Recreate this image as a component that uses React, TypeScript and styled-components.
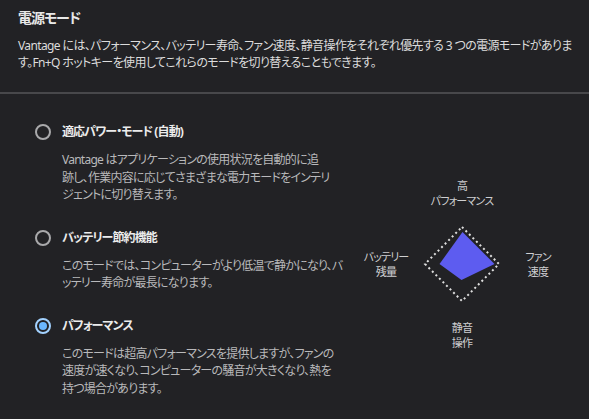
import React from "react";
import styled, { createGlobalStyle } from "styled-components";

const Global = createGlobalStyle`
  html, body { margin: 0; padding: 0; background: #222225; }
  body {
    font-family: "Noto Sans", "Noto Sans CJK JP", sans-serif;
    font-feature-settings: "palt";
    -webkit-font-smoothing: antialiased;
  }
`;

const Page = styled.div`
  width: 589px;
  height: 419px;
  background: #222225;
  color: #e4e4e4;
  overflow: hidden;
  display: flex;
  flex-direction: column;
`;

const Header = styled.header`
  padding: 8px 10px 21px 18px;
  border-bottom: 2px solid #48484b;
`;

const Title = styled.h1`
  margin: 0;
  font-size: 14px;
  line-height: 20px;
  font-weight: 700;
  letter-spacing: -1px;
  color: #e8e8e8;
`;

const Lead = styled.p`
  margin: 10px 0 0;
  font-size: 12px;
  line-height: 16.5px;
  letter-spacing: -0.62px;
  color: #dcdcdc;
  white-space: nowrap;
`;

const Body = styled.main`
  flex: 1;
  display: flex;
  align-items: flex-start;
`;

const Options = styled.div`
  width: 296px;
  padding: 28px 0 0 35px;
  display: flex;
  flex-direction: column;
  gap: 24px;
`;

const Option = styled.label`
  display: flex;
  align-items: flex-start;
  gap: 11px;
`;

const Radio = styled.span<{ $checked?: boolean }>`
  flex-shrink: 0;
  box-sizing: border-box;
  width: 16px;
  height: 16px;
  margin-top: 2px;
  border-radius: 50%;
  border: 2px solid ${(p) => (p.$checked ? "#a3d2ff" : "#a9a9ab")};
  display: grid;
  place-items: center;
  &::after {
    content: "";
    display: ${(p) => (p.$checked ? "block" : "none")};
    width: 8px;
    height: 8px;
    border-radius: 50%;
    background: #6ab7ff;
  }
`;

const OptionText = styled.div`
  display: flex;
  flex-direction: column;
  gap: 9px;
`;

const OptionTitle = styled.div`
  font-size: 12px;
  line-height: 20px;
  font-weight: 700;
  letter-spacing: -0.9px;
  color: #ececec;
`;

const OptionDesc = styled.div`
  font-size: 12px;
  line-height: 17.5px;
  letter-spacing: -0.75px;
  color: #b9b9bb;
  white-space: nowrap;
`;

const ChartArea = styled.section`
  flex: 1;
  align-self: stretch;
  display: flex;
  justify-content: center;
  padding: 84px 0 0 4px;
`;

const Chart = styled.div`
  display: grid;
  grid-template-columns: 64px 80px 64px;
  grid-template-rows: 30px 80px 30px;
  column-gap: 4px;
  row-gap: 16px;
  align-items: center;
  justify-items: center;
`;

const Label = styled.div<{ $col: number; $row: number }>`
  grid-column: ${(p) => p.$col};
  grid-row: ${(p) => p.$row};
  font-size: 11px;
  line-height: 15px;
  letter-spacing: -0.8px;
  text-align: center;
  color: #cfcfd1;
  white-space: nowrap;
`;

const Diamond = styled.svg`
  grid-column: 2;
  grid-row: 2;
  width: 80px;
  height: 80px;
  display: block;
`;

export default function App() {
  return (
    <Page>
      <Global />
      <Header>
        <Title>電源モード</Title>
        <Lead>
          Vantage には、パフォーマンス、バッテリー寿命、ファン速度、静音操作をそれぞれ優先する 3 つの電源モードがありま
          <br />
          す。Fn+Q ホットキーを使用してこれらのモードを切り替えることもできます。
        </Lead>
      </Header>
      <Body>
        <Options>
          <Option>
            <Radio />
            <OptionText>
              <OptionTitle>適応パワー・モード (自動)</OptionTitle>
              <OptionDesc>
                Vantage はアプリケーションの使用状況を自動的に追
                <br />
                跡し、作業内容に応じてさまざまな電力モードをインテリ
                <br />
                ジェントに切り替えます。
              </OptionDesc>
            </OptionText>
          </Option>
          <Option>
            <Radio />
            <OptionText>
              <OptionTitle>バッテリー節約機能</OptionTitle>
              <OptionDesc>
                このモードでは、コンピューターがより低温で静かになり、バ
                <br />
                ッテリー寿命が最長になります。
              </OptionDesc>
            </OptionText>
          </Option>
          <Option>
            <Radio $checked />
            <OptionText>
              <OptionTitle>パフォーマンス</OptionTitle>
              <OptionDesc>
                このモードは超高パフォーマンスを提供しますが、ファンの
                <br />
                速度が速くなり、コンピューターの騒音が大きくなり、熱を
                <br />
                持つ場合があります。
              </OptionDesc>
            </OptionText>
          </Option>
        </Options>
        <ChartArea>
          <Chart>
            <Label $col={2} $row={1}>
              高
              <br />
              パフォーマンス
            </Label>
            <Label $col={1} $row={2}>
              バッテリー
              <br />
              残量
            </Label>
            <Diamond viewBox="0 0 80 80">
              <polygon
                points="40,3 77,40 40,77 3,40"
                fill="none"
                stroke="#dedede"
                strokeWidth="2"
                strokeDasharray="2 3"
              />
              <polygon points="40.5,8 72.5,40 39.5,56 17.5,40" fill="#5d5cf0" />
            </Diamond>
            <Label $col={3} $row={2}>
              ファン
              <br />
              速度
            </Label>
            <Label $col={2} $row={3}>
              静音
              <br />
              操作
            </Label>
          </Chart>
        </ChartArea>
      </Body>
    </Page>
  );
}
